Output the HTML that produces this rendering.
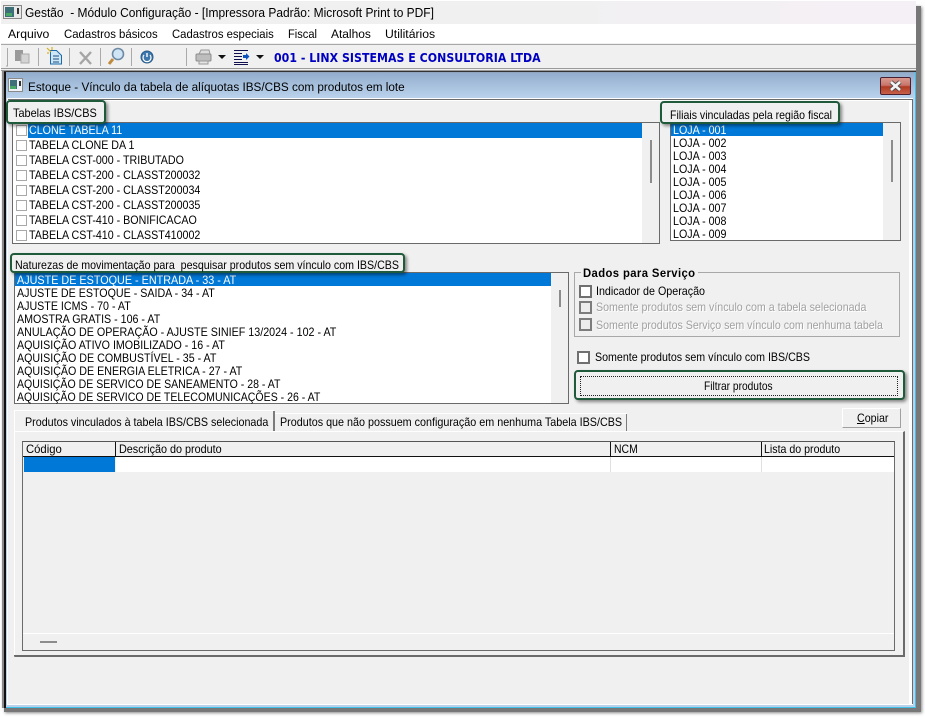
<!DOCTYPE html>
<html><head><meta charset="utf-8">
<style>
html,body{margin:0;padding:0;background:#fff}
#p{position:relative;width:925px;height:717px;overflow:hidden;background:#fff;font:12px "Liberation Sans",sans-serif;color:#000}
#p div,#p span.t,#p svg{position:absolute}
.t{white-space:nowrap;line-height:14px;height:14px;transform-origin:0 0;transform:scaleX(.89)}
.list{background:#fff;border:1px solid #6a6a6a;box-sizing:border-box}
.sel{background:#0078d7}
.thumb{background:#8c8c8c}
.sb{background:#f0f0f0}
.call{box-sizing:border-box;border:2px solid #1f5a3a;border-radius:4px;background:#f0f0f0;box-shadow:2px 2px 3px rgba(0,0,0,.45)}
.cb{box-sizing:border-box;width:13px;height:13px;border:2px solid #707070;background:#fff}
.cbs{box-sizing:border-box;width:11px;height:11px;margin:1px 0 0 1px;border:1px solid #a8a8a8;background:#fff}
.cbd{box-sizing:border-box;width:13px;height:13px;border:2px solid #7c7c7c;background:#ececec}
.dis{color:#a0a0a0;text-shadow:1px 1px 0 #fff}
.w{color:#fff}
</style></head><body>
<div id="p">
<!-- outer shadow -->
<div style="left:4px;top:6px;width:917px;height:706px;background:#777;box-shadow:1px 1px 3px #888"></div>
<!-- outer window -->
<div style="left:1px;top:1px;width:915px;height:707px;background:#f0f0f0"></div>
<div style="left:1px;top:1px;width:915px;height:23px;background:linear-gradient(90deg,#f0f0f0 55%,#f5f0f6)"></div>
<svg style="left:3px;top:5px" width="20" height="15" viewBox="0 0 20 15"><rect x=".5" y=".5" width="18" height="13" fill="#e8e8e8" stroke="#888"/><rect x="2" y="2" width="9" height="10" fill="#3c6f78"/><rect x="3" y="8" width="6" height="3" fill="#48a868"/><rect x="14" y="3" width="2" height="6" fill="#333"/></svg>
<span class="t" style="left:25px;top:6px;font-size:12.6px;transform:scaleX(.95)">Gestão&nbsp; - Módulo Configuração - [Impressora Padrão: Microsoft Print to PDF]</span>
<!-- menu -->
<div style="left:1px;top:24px;width:915px;height:19px;background:#fff"></div>
<span class="t" style="left:8px;top:27px;font-size:12.2px;transform:scaleX(1)">Arquivo</span>
<span class="t" style="left:64px;top:27px;font-size:12.2px;transform:scaleX(.934)">Cadastros básicos</span>
<span class="t" style="left:172px;top:27px;font-size:12.2px;transform:scaleX(.927)">Cadastros especiais</span>
<span class="t" style="left:288px;top:27px;font-size:12.2px;transform:scaleX(.91)">Fiscal</span>
<span class="t" style="left:331px;top:27px;font-size:12.2px;transform:scaleX(.98)">Atalhos</span>
<span class="t" style="left:385px;top:27px;font-size:12.2px;transform:scaleX(1)">Utilitários</span>
<!-- toolbar -->
<div style="left:1px;top:44px;width:915px;height:1px;background:#a8a8a8"></div>
<div style="left:1px;top:45px;width:915px;height:23px;background:#f0f0f0"></div>
<div style="left:1px;top:68px;width:915px;height:1px;background:#9a9a9a"></div>
<div style="left:1px;top:70px;width:915px;height:1px;background:#9a9a9a"></div>
<svg style="left:0;top:44px" width="280" height="26" viewBox="0 0 280 26">
<g stroke="#aaa" fill="none"><path d="M7.500 4V22H6M38.500 4V22M69.500 4V22M100.500 4V22M131.500 4V22M186.500 4V22"/></g>
<path d="M15 6h8v11h-8z" fill="#9a9a9a"/><path d="M21 10h8v9h-8z" fill="#d4d4d4" stroke="#aaa"/>
<path d="M50.500 6.500h6l5 5v8.500h-11z" fill="#cfe6f7" stroke="#1c6aa8"/><path d="M53 12h6M53 15h6M53 18h6" stroke="#1c4f80"/><path d="M49 6l2 2M47 4l2 2M52 3v3M47 9h2" stroke="#d8b020" stroke-width="1.2"/>
<path d="M80 8l11 12M91 8L80 20" stroke="#a5a5a5" stroke-width="2.400"/>
<circle cx="118" cy="10" r="5.500" fill="#cfe4f5" stroke="#6f8aa5" stroke-width="1.600"/><path d="M113 15l-4 5" stroke="#c08a3c" stroke-width="3"/>
<circle cx="147" cy="13" r="6" fill="#3f78ad" stroke="#285a88"/><path d="M147 9v4" stroke="#fff" stroke-width="1.400"/><path d="M144 11a4 4 0 1 0 6 0" fill="none" stroke="#fff" stroke-width="1.200"/>
<path d="M199 10l2-4h8l1 4z" fill="#ddd" stroke="#999"/><rect x="196" y="10" width="15" height="7" rx="1" fill="#bdbdbd" stroke="#8c8c8c"/><rect x="199" y="17" width="9" height="3" fill="#e4e4e4" stroke="#999"/>
<path d="M218 11h8l-4 4z" fill="#111"/>
<path d="M234 6.500h14M234 9.500h8M234 12.500h8M234 15.500h8M234 18.500h14M234 20.500h14" stroke="#101050"/><path d="M243 11h3v-2l3.500 3.500-3.500 3.500v-2h-3z" fill="#1050c0"/>
<path d="M256 11h8l-4 4z" fill="#111"/>
</svg>
<span class="t" style="left:274px;top:51px;font:bold 12px 'DejaVu Sans',sans-serif;color:#0000c0;letter-spacing:.03px;transform:scaleX(.915)">001 - LINX SISTEMAS E CONSULTORIA LTDA</span>
<!-- child window -->
<div style="left:2px;top:71px;width:2px;height:637px;background:#8a8a8a"></div>
<div style="left:4px;top:71px;width:2px;height:637px;background:#111"></div>
<div style="left:6px;top:72px;width:910px;height:636px;background:#3fc0e8"></div>
<div style="left:4px;top:71px;width:912px;height:1px;background:#333"></div>
<div style="left:6px;top:72px;width:909px;height:1px;background:#8fa5c0"></div>
<div style="left:6px;top:73px;width:909px;height:25px;background:linear-gradient(#93aecd,#bad2ec)"></div>
<div style="left:6px;top:98px;width:909px;height:609px;background:#b9d1ea"></div>
<div style="left:7px;top:98px;width:906px;height:607px;background:#fff"></div>
<div style="left:8px;top:99px;width:905px;height:605px;background:#6b6b6b"></div>
<div style="left:8px;top:100px;width:904px;height:604px;background:#fff"></div>
<div style="left:8px;top:101px;width:901px;height:603px;background:#f0f0f0"></div>
<svg style="left:8px;top:78px" width="16" height="15" viewBox="0 0 16 15"><rect x=".5" y=".5" width="14" height="13" fill="#eef2f6" stroke="#8a8a8a"/><rect x="2" y="2" width="7" height="9" fill="#3c6f78"/><rect x="2" y="8" width="6" height="3" fill="#48a868"/><rect x="11" y="3" width="2" height="5" fill="#333"/></svg>
<span class="t" style="left:28px;top:80px;font-size:12.2px;transform:scaleX(.962)">Estoque - Vínculo da tabela de alíquotas IBS/CBS com produtos em lote</span>
<div style="left:880px;top:77px;width:31px;height:18px;box-sizing:border-box;border:1px solid #4a2030;border-radius:2px;background:linear-gradient(#d99a90 0,#c9756c 45%,#b03a22 55%,#c8604a 100%)"></div>
<svg style="left:880px;top:77px" width="31" height="18" viewBox="0 0 31 18"><path d="M11 5l9 8M20 5l-9 8" stroke="#4a4a50" stroke-width="4.400"/><path d="M11 5l9 8M20 5l-9 8" stroke="#f4f4f4" stroke-width="2.600"/></svg>

<!-- Tabelas list -->
<div class="list" style="left:12px;top:122px;width:648px;height:122px"></div>
<div class="sel" style="left:28px;top:123px;width:614px;height:15px"></div>
<div class="sb" style="left:642px;top:123px;width:17px;height:120px"></div>
<div class="thumb" style="left:650px;top:140px;width:2px;height:43px"></div>
<div class="cbs" style="left:15px;top:124px"></div><span class="t w" style="left:29px;top:123px">CLONE TABELA 11</span>
<div class="cbs" style="left:15px;top:139px"></div><span class="t" style="left:29px;top:138px">TABELA CLONE DA 1</span>
<div class="cbs" style="left:15px;top:154px"></div><span class="t" style="left:29px;top:153px">TABELA CST-000 - TRIBUTADO</span>
<div class="cbs" style="left:15px;top:169px"></div><span class="t" style="left:29px;top:168px">TABELA CST-200 - CLASST200032</span>
<div class="cbs" style="left:15px;top:184px"></div><span class="t" style="left:29px;top:183px">TABELA CST-200 - CLASST200034</span>
<div class="cbs" style="left:15px;top:199px"></div><span class="t" style="left:29px;top:198px">TABELA CST-200 - CLASST200035</span>
<div class="cbs" style="left:15px;top:214px"></div><span class="t" style="left:29px;top:213px">TABELA CST-410 - BONIFICACAO</span>
<div class="cbs" style="left:15px;top:229px"></div><span class="t" style="left:29px;top:228px">TABELA CST-410 - CLASST410002</span>
<div class="call" style="left:6px;top:100px;width:100px;height:24px"></div>
<span class="t" style="left:13px;top:106px;transform:scaleX(.91)">Tabelas IBS/CBS</span>

<!-- Filiais list -->
<div class="list" style="left:670px;top:122px;width:231px;height:119px"></div>
<div class="sel" style="left:671px;top:123px;width:212px;height:13px"></div>
<div class="sb" style="left:883px;top:123px;width:17px;height:117px"></div>
<div class="thumb" style="left:891px;top:140px;width:2px;height:42px"></div>
<span class="t w" style="left:673px;top:123px">LOJA - 001</span>
<span class="t" style="left:673px;top:136px">LOJA - 002</span>
<span class="t" style="left:673px;top:149px">LOJA - 003</span>
<span class="t" style="left:673px;top:162px">LOJA - 004</span>
<span class="t" style="left:673px;top:175px">LOJA - 005</span>
<span class="t" style="left:673px;top:188px">LOJA - 006</span>
<span class="t" style="left:673px;top:201px">LOJA - 007</span>
<span class="t" style="left:673px;top:214px">LOJA - 008</span>
<span class="t" style="left:673px;top:227px">LOJA - 009</span>
<div class="call" style="left:660px;top:101px;width:180px;height:23px"></div>
<span class="t" style="left:670px;top:108px;transform:scaleX(.88)">Filiais vinculadas pela região fiscal</span>

<!-- Naturezas list -->
<div class="list" style="left:14px;top:272px;width:555px;height:132px"></div>
<div class="sel" style="left:15px;top:273px;width:536px;height:13px"></div>
<div class="sb" style="left:551px;top:273px;width:17px;height:130px"></div>
<div class="thumb" style="left:559px;top:290px;width:2px;height:17px"></div>
<span class="t w" style="left:17px;top:273px;transform:scaleX(.9)">AJUSTE DE ESTOQUE - ENTRADA - 33 - AT</span>
<span class="t" style="left:17px;top:286px">AJUSTE DE ESTOQUE - SAIDA - 34 - AT</span>
<span class="t" style="left:17px;top:299px">AJUSTE ICMS - 70 - AT</span>
<span class="t" style="left:17px;top:312px">AMOSTRA GRATIS - 106 - AT</span>
<span class="t" style="left:17px;top:325px;transform:scaleX(.894)">ANULAÇÃO DE OPERAÇÃO - AJUSTE SINIEF 13/2024 - 102 - AT</span>
<span class="t" style="left:17px;top:338px">AQUISIÇÃO ATIVO IMOBILIZADO - 16 - AT</span>
<span class="t" style="left:17px;top:351px">AQUISIÇÃO DE COMBUSTÍVEL - 35 - AT</span>
<span class="t" style="left:17px;top:364px">AQUISIÇÃO DE ENERGIA ELETRICA - 27 - AT</span>
<span class="t" style="left:17px;top:377px;transform:scaleX(.88)">AQUISIÇÃO DE SERVICO DE SANEAMENTO - 28 - AT</span>
<span class="t" style="left:17px;top:390px;transform:scaleX(.88)">AQUISIÇÃO DE SERVICO DE TELECOMUNICAÇÕES - 26 - AT</span>
<div class="call" style="left:10px;top:253px;width:395px;height:20px"></div>
<span class="t" style="left:15px;top:258px;transform:scaleX(.887)">Naturezas de movimentação para&nbsp; pesquisar produtos sem vínculo com IBS/CBS</span>

<!-- Dados -->
<div style="left:574px;top:272px;width:326px;height:65px;box-sizing:border-box;border:1px solid #a8a8a8"></div>
<div style="left:581px;top:266px;width:117px;height:14px;background:#f0f0f0"></div>
<span class="t" style="left:583px;top:266px;font-weight:bold;font-size:12px;letter-spacing:.42px;transform:scaleX(.94)">Dados para Serviço</span>
<div class="cb" style="left:579px;top:285px"></div>
<span class="t" style="left:596px;top:284px;transform:scaleX(.893)">Indicador de Operação</span>
<div class="cbd" style="left:579px;top:301px"></div>
<span class="t dis" style="left:596px;top:300px;transform:scaleX(.887)">Somente produtos sem vínculo com a tabela selecionada</span>
<div class="cbd" style="left:579px;top:318px"></div>
<span class="t dis" style="left:596px;top:318px;transform:scaleX(.885)">Somente produtos Serviço sem vínculo com nenhuma tabela</span>
<div class="cb" style="left:577px;top:351px"></div>
<span class="t" style="left:595px;top:350px;transform:scaleX(.888)">Somente produtos sem vínculo com IBS/CBS</span>
<div class="call" style="left:574px;top:370px;width:331px;height:30px"></div>
<div style="left:580px;top:376px;width:318px;height:20px;box-sizing:border-box;border:1px dotted #222"></div>
<span class="t" style="left:704px;top:379px;transform:scaleX(.85)">Filtrar produtos</span>
<div style="left:842px;top:408px;width:59px;height:20px;box-sizing:border-box;border-top:1px solid #fff;border-left:1px solid #fff;border-right:1px solid #a0a0a0;border-bottom:1px solid #a0a0a0"></div>
<span class="t" style="left:857px;top:411px"><u>C</u>opiar</span>

<!-- Tabs -->
<div style="left:14px;top:410px;width:260px;height:1px;background:#fff"></div>
<div style="left:14px;top:410px;width:1px;height:21px;background:#fff"></div>
<div style="left:273px;top:411px;width:2px;height:20px;background:#7c7c7c"></div>
<span class="t" style="left:25px;top:415px;transform:scaleX(.894)">Produtos vinculados à tabela IBS/CBS selecionada</span>
<div style="left:275px;top:413px;width:352px;height:1px;background:#fff"></div>
<div style="left:626px;top:414px;width:1px;height:17px;background:#7c7c7c"></div>
<span class="t" style="left:280px;top:415px;transform:scaleX(.897)">Produtos que não possuem configuração em nenhuma Tabela IBS/CBS</span>
<!-- tab pane -->
<div style="left:14px;top:431px;width:891px;height:226px;box-sizing:border-box;border-left:1px solid #fff;border-top:1px solid #fff;border-right:2px solid #6b6b6b;border-bottom:2px solid #6b6b6b"></div>
<div style="left:14px;top:655px;width:891px;height:1px;background:#6b6b6b"></div>
<!-- grid -->
<div style="left:22px;top:441px;width:873px;height:210px;box-sizing:border-box;border:1px solid #6b6b6b;border-top:1px solid #555"></div>
<div style="left:23px;top:456px;width:871px;height:1px;background:#111"></div>
<div style="left:115px;top:442px;width:1px;height:15px;background:#111"></div>
<div style="left:610px;top:442px;width:1px;height:15px;background:#111"></div>
<div style="left:761px;top:442px;width:1px;height:15px;background:#111"></div>
<div style="left:24px;top:457px;width:91px;height:15px;background:#0078d7"></div>
<div style="left:116px;top:457px;width:778px;height:15px;background:#fff"></div>
<div style="left:610px;top:457px;width:1px;height:15px;background:#e0e0e0"></div>
<div style="left:761px;top:457px;width:1px;height:15px;background:#e0e0e0"></div>
<span class="t" style="left:26px;top:442px;transform:scaleX(.94)">Código</span>
<span class="t" style="left:119px;top:442px;transform:scaleX(.9)">Descrição do produto</span>
<span class="t" style="left:614px;top:442px;transform:scaleX(.87)">NCM</span>
<span class="t" style="left:764px;top:442px;transform:scaleX(.885)">Lista do produto</span>
<div style="left:23px;top:633px;width:871px;height:1px;background:#fff"></div>
<div style="left:40px;top:641px;width:17px;height:2px;background:#8c8c8c"></div>
</div>
</body></html>
